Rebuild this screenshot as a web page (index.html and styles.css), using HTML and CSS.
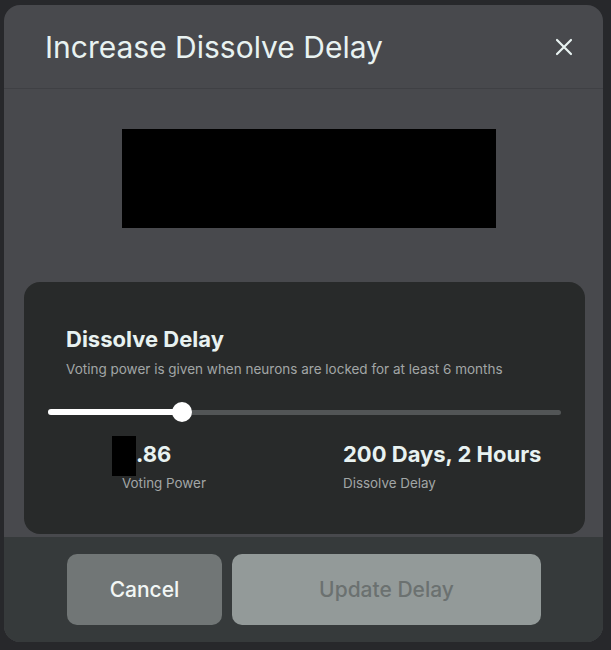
FILE: index.html
```html
<!DOCTYPE html>
<html lang="en">
<head>
    <meta charset="UTF-8">
    <meta name="viewport" content="width=device-width, initial-scale=1.0">
    <title>Increase Dissolve Delay</title>
    <link rel="stylesheet" href="styles.css">
</head>
<body>
    <div class="modal">
        <div class="modal-header">
            <h1>Increase Dissolve Delay</h1>
            <button class="close-btn" aria-label="Close">
                <svg width="18" height="18" viewBox="0 0 18 18">
                    <path d="M2 2 L16 16 M16 2 L2 16" stroke="currentColor" stroke-width="2.2" stroke-linecap="round"/>
                </svg>
            </button>
        </div>

        <div class="modal-body">
            <div class="hidden-box"></div>

            <div class="delay-card">
                <h2>Dissolve Delay</h2>
                <p class="hint">Voting power is given when neurons are locked for at least 6 months</p>

                <div class="slider">
                    <div class="slider-track"></div>
                    <div class="slider-fill" style="width: 26.1%"></div>
                    <div class="slider-thumb" style="left: 26.1%"></div>
                </div>

                <div class="stats">
                    <div class="stat">
                        <div class="stat-value"><span class="redact"></span>.86</div>
                        <div class="stat-label indent">Voting Power</div>
                    </div>
                    <div class="stat">
                        <div class="stat-value">200 Days, 2 Hours</div>
                        <div class="stat-label">Dissolve Delay</div>
                    </div>
                </div>
            </div>
        </div>

        <div class="modal-footer">
            <button class="btn btn-cancel">Cancel</button>
            <button class="btn btn-update" disabled>Update Delay</button>
        </div>
    </div>
</body>
</html>
```

FILE: styles.css
```css
body {
    margin: 0;
    background-color: #27282b;
    font-family: Inter, "Noto Sans", sans-serif;
    color: #e8f2f1;
    width: 611px;
    height: 650px;
    overflow: hidden;
}

.modal {
    margin: 5px 8px 0 4px;
    width: 599px;
    height: 637px;
    background: #48494d;
    border-radius: 16px;
    overflow: hidden;
    display: flex;
    flex-direction: column;
}

.modal-header {
    height: 83px;
    border-bottom: 1px solid #3f4044;
    display: flex;
    align-items: center;
    justify-content: space-between;
    padding: 0 30px 0 41px;
}

h1 {
    margin: 0;
    font-size: 30px;
    font-weight: 400;
    line-height: 36px;
}

.close-btn {
    background: none;
    border: none;
    padding: 0;
    color: #e8f2f1;
    width: 18px;
    height: 18px;
    display: flex;
    cursor: pointer;
}

.modal-body {
    flex: 1;
}

.hidden-box {
    width: 374px;
    height: 99px;
    background: #000;
    margin: 40px 0 0 118px;
}

.delay-card {
    margin: 54px 18px 0 20px;
    height: 252px;
    box-sizing: border-box;
    padding: 44px 24px 0 24px;
    background: #282a2a;
    border-radius: 16px;
}

h2 {
    margin: 0 0 0 18px;
    font-size: 22px;
    font-weight: 700;
    line-height: 27px;
}

.hint {
    margin: 8px 0 0 18px;
    font-size: 13.5px;
    line-height: 16px;
    color: #a2a6a6;
}

.slider {
    position: relative;
    height: 20px;
    margin-top: 25px;
}

.slider-track {
    position: absolute;
    left: 0;
    right: 0;
    top: 8px;
    height: 5px;
    border-radius: 3px;
    background: #525556;
}

.slider-fill {
    position: absolute;
    left: 0;
    top: 7px;
    height: 6px;
    border-radius: 3px;
    background: #fff;
}

.slider-thumb {
    position: absolute;
    top: 0;
    width: 20px;
    height: 20px;
    margin-left: -10px;
    border-radius: 50%;
    background: #fff;
}

.stats {
    display: grid;
    grid-template-columns: 231px auto;
    margin-top: 20px;
    padding-left: 64px;
}

.stat-value {
    display: flex;
    align-items: center;
    height: 24px;
    font-size: 22px;
    font-weight: 700;
}

.redact {
    width: 24px;
    height: 40px;
    margin-top: 4px;
    background: #000;
}

.stat-label {
    margin-top: 9px;
    font-size: 13.4px;
    line-height: 16px;
    color: #a2a6a6;
}

.indent {
    padding-left: 10px;
}

.modal-footer {
    margin-top: 3px;
    height: 105px;
    box-sizing: border-box;
    padding: 17px 62px 17px 63px;
    background: #363a3b;
    display: flex;
    gap: 10px;
}

.btn {
    border: none;
    border-radius: 10px;
    font-family: Inter, "Noto Sans", sans-serif;
    font-size: 21px;
    font-weight: 500;
    cursor: pointer;
}

.btn-cancel {
    width: 155px;
    background: #717676;
    color: #f2f6f5;
}

.btn-update {
    flex: 1;
    background: #939a99;
    color: #6b7170;
    cursor: default;
}
```
